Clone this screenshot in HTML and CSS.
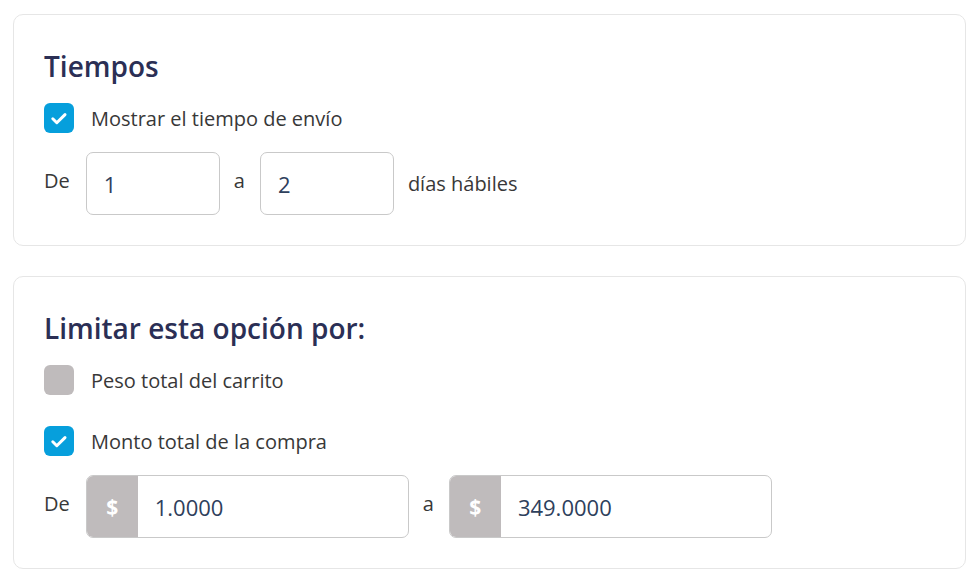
FILE: index.html
```html
<!DOCTYPE html>
<html lang="es">
<head>
    <meta charset="UTF-8">
    <meta name="viewport" content="width=device-width, initial-scale=1.0">
    <title>Opciones de envío</title>
    <link rel="stylesheet" href="styles.css">
</head>
<body>
    <div class="card">
        <h2 class="card-title">Tiempos</h2>
        <label class="check-row">
            <span class="check on">
                <svg viewBox="0 0 30 30" width="30" height="30"><path d="M8.8 15.8l4 3.9 8.2-8.1" fill="none" stroke="#fff" stroke-width="3" stroke-linecap="round" stroke-linejoin="round"/></svg>
            </span>
            <span class="check-text">Mostrar el tiempo de envío</span>
        </label>
        <div class="range-row">
            <span class="word">De</span>
            <div class="field small"><span class="value">1</span></div>
            <span class="word">a</span>
            <div class="field small"><span class="value">2</span></div>
            <span class="word tail">días hábiles</span>
        </div>
    </div>

    <div class="card">
        <h2 class="card-title">Limitar esta opción por:</h2>
        <label class="check-row">
            <span class="check"></span>
            <span class="check-text">Peso total del carrito</span>
        </label>
        <label class="check-row second">
            <span class="check on">
                <svg viewBox="0 0 30 30" width="30" height="30"><path d="M8.8 15.8l4 3.9 8.2-8.1" fill="none" stroke="#fff" stroke-width="3" stroke-linecap="round" stroke-linejoin="round"/></svg>
            </span>
            <span class="check-text">Monto total de la compra</span>
        </label>
        <div class="range-row">
            <span class="word">De</span>
            <div class="field money">
                <span class="prefix">$</span>
                <span class="value">1.0000</span>
            </div>
            <span class="word">a</span>
            <div class="field money">
                <span class="prefix">$</span>
                <span class="value">349.0000</span>
            </div>
        </div>
    </div>
</body>
</html>
```

FILE: styles.css
```css
* {
    margin: 0;
    padding: 0;
    box-sizing: border-box;
}
body {
    background: #fff;
    font-family: "Open Sans", "Noto Sans", sans-serif;
    padding: 14px 14px 0 13px;
    color: #353535;
}
.card {
    border: 1px solid #e6e6e6;
    border-radius: 10px;
    padding: 32px 30px 30px 30px;
    margin-bottom: 30px;
}
.card-title {
    font-size: 28px;
    font-weight: 600;
    color: #2b2f55;
    line-height: 38px;
    margin-bottom: 18px;
}
.check-row {
    display: flex;
    align-items: center;
    gap: 17px;
    height: 30px;
}
.check-row.second {
    margin-top: 31px;
}
.check {
    width: 30px;
    height: 30px;
    border-radius: 6px;
    background: #bfbbbc;
    display: flex;
    align-items: center;
    justify-content: center;
}
.check.on {
    background: #069fdc;
}
.check-text {
    font-size: 20px;
    color: #383838;
}
.range-row {
    display: flex;
    align-items: center;
    margin-top: 19px;
}
.word {
    font-size: 20px;
    color: #383838;
    margin-top: -6px;
    margin-right: 16px;
}
.word + .field + .word {
    margin-left: 14px;
    margin-right: 15px;
}
.word.tail {
    margin-top: 0;
    margin-left: 16px;
}
.field {
    height: 63px;
    border: 1px solid #c9c9c9;
    border-radius: 7px;
    display: flex;
    align-items: center;
    background: #fff;
    overflow: hidden;
}
.field.small {
    width: 134px;
    padding-left: 17px;
}
.field.money {
    width: 323px;
}
.value {
    font-size: 22px;
    color: #2e405c;
}
.prefix {
    width: 51px;
    height: 100%;
    background: #bfbbbc;
    color: #fff;
    font-weight: 700;
    font-size: 21px;
    display: flex;
    align-items: center;
    justify-content: center;
    margin-right: 17px;
}
```
